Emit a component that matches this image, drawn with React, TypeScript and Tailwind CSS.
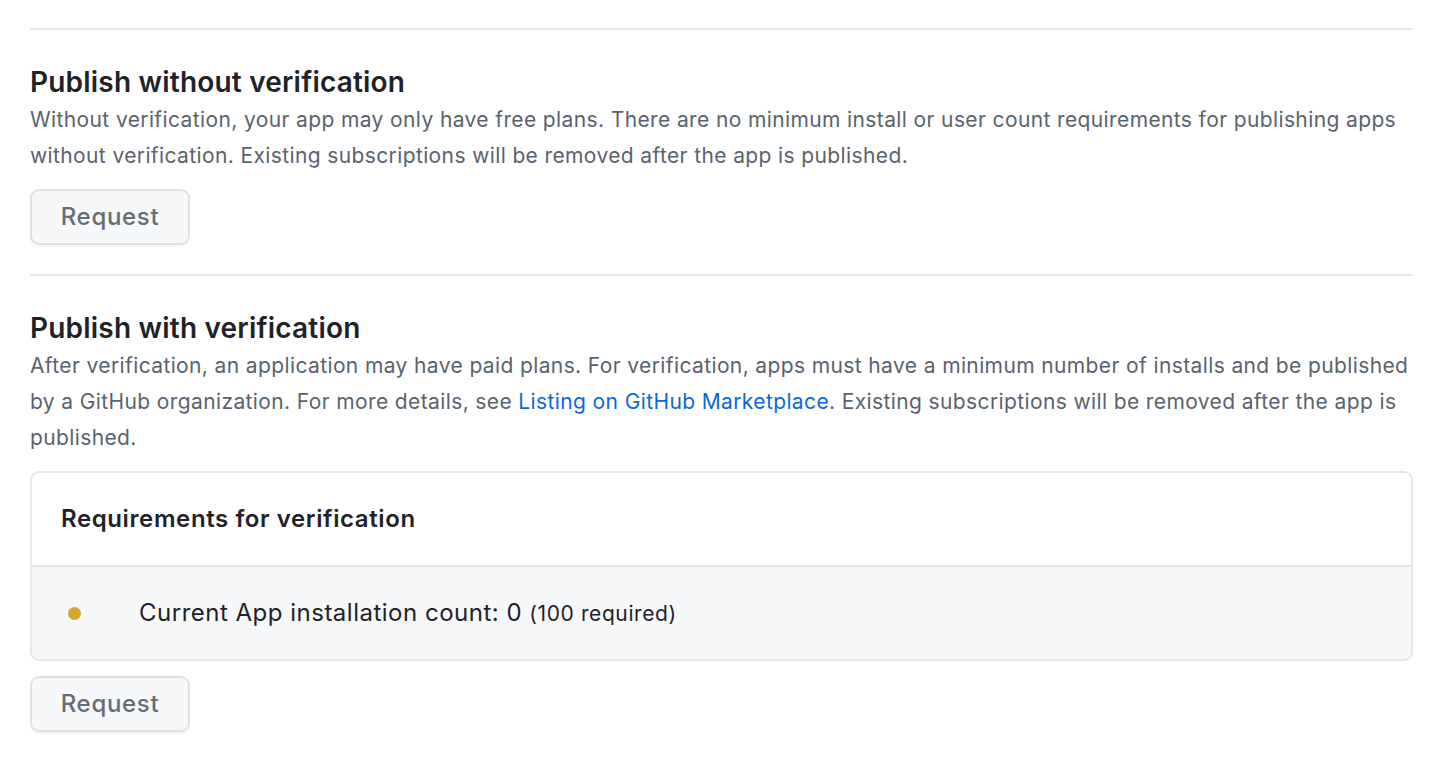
import React from 'react';

const font = { fontFamily: 'Inter, "Noto Sans", sans-serif' };

// Grey outline button used under each section
function RequestButton() {
  return (
    <button
      type="button"
      className="h-[56px] w-[160px] rounded-[9px] border-2 border-[#dde2e7] bg-[#f6f8fa] text-[24px] font-medium tracking-[0.7px] text-[#656d76] shadow-[0_2px_0_rgba(31,35,40,0.04)]"
    >
      Request
    </button>
  );
}

export default function App() {
  return (
    <div className="min-h-screen bg-white pl-[30px] pr-[27px] pt-[28px]" style={font}>
      <div className="border-t-2 border-[#e3e6ea]" />

      {/* Publish without verification */}
      <section className="pt-[34px] pb-[29px]">
        <h2 className="text-[28px] font-semibold leading-[36px] tracking-[0.2px] text-[#1f2328]">Publish without verification</h2>
        <p className="mt-[2px] text-[21px] leading-[36px] tracking-[0.38px] text-[#59636e]">
          Without verification, your app may only have free plans. There are no minimum install or user count requirements for publishing apps without verification. Existing subscriptions will be removed after the app is published.
        </p>
        <div className="mt-[15px]">
          <RequestButton />
        </div>
      </section>

      <div className="border-t-2 border-[#e3e6ea]" />

      {/* Publish with verification */}
      <section className="pt-[34px]">
        <h2 className="text-[28px] font-semibold leading-[36px] tracking-[0.2px] text-[#1f2328]">Publish with verification</h2>
        <p className="mt-[2px] text-[21px] leading-[36px] tracking-[0.38px] text-[#59636e]">
          After verification, an application may have paid plans. For verification, apps must have a minimum number of installs and be published by a GitHub organization. For more details, see{' '}
          <a href="#" className="text-[#0969da]">Listing on GitHub Marketplace</a>. Existing subscriptions will be removed after the app is published.
        </p>

        <div className="mt-[15px] overflow-hidden rounded-[9px] border-2 border-[#e3e6ea]">
          <div className="flex h-[92px] items-center bg-white px-[29px]">
            <h3 className="text-[24px] font-semibold tracking-[0.6px] text-[#1f2328]">Requirements for verification</h3>
          </div>
          <div className="flex h-[94px] items-center border-t-2 border-[#e3e6ea] bg-[#f6f8fa] px-[36px]">
            <span className="h-[13px] w-[13px] rounded-full bg-[#d4a72c]" />
            <span className="ml-[58px] text-[24px] tracking-[0.5px] text-[#1f2328]">
              Current App installation count: 0 <span className="text-[21px] tracking-[0.6px]">(100 required)</span>
            </span>
          </div>
        </div>

        <div className="mt-[15px]">
          <RequestButton />
        </div>
      </section>
    </div>
  );
}
